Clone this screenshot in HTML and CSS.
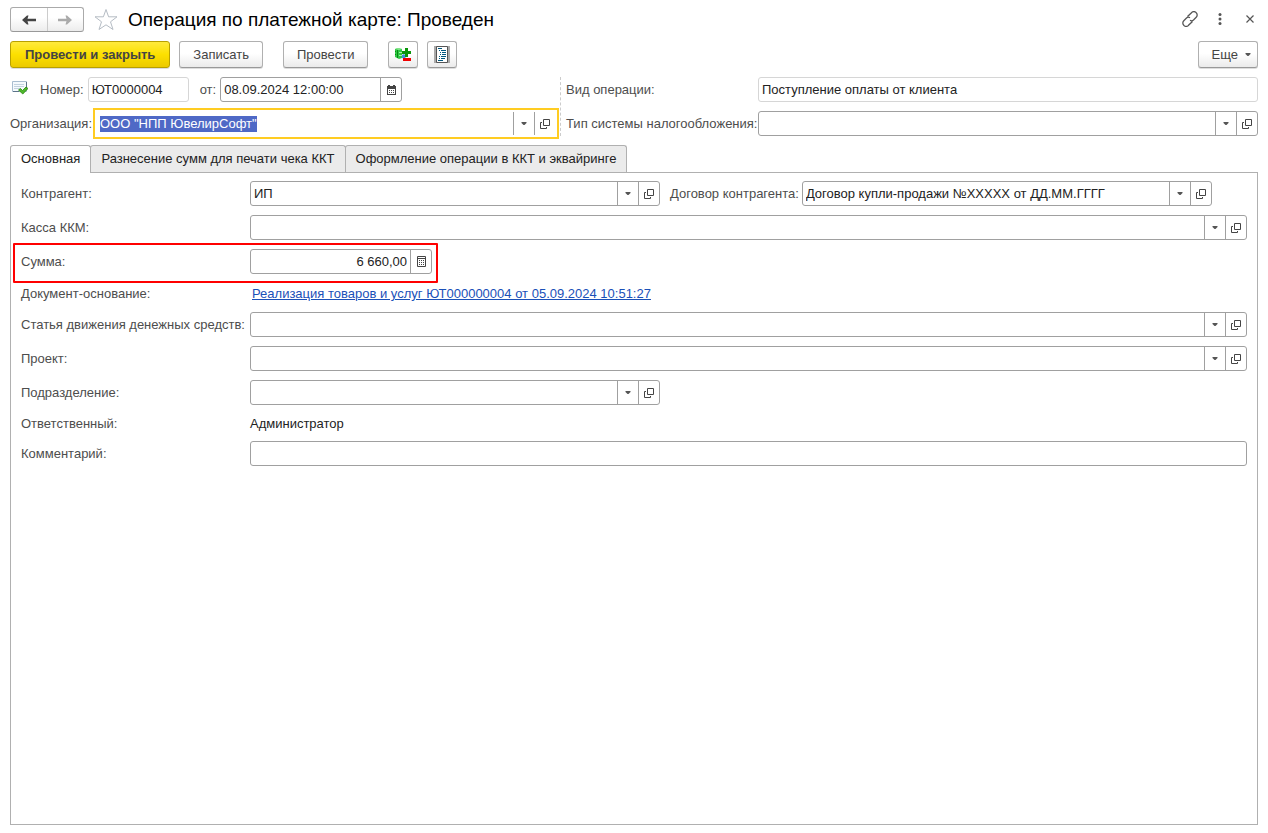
FILE: index.html
```html
<!DOCTYPE html>
<html lang="ru">
<head>
<meta charset="utf-8">
<title>Операция по платежной карте: Проведен</title>
<link rel="stylesheet" href="styles.css">
</head>
<body>
<svg class="sprite" aria-hidden="true">
  <symbol id="arrow-down" viewBox="0 0 6 4"><path d="M.5 0h5v1L3.500 3h-1L.5 1z" fill="#555"/></symbol>
  <symbol id="open" viewBox="0 0 10 10" fill="none" stroke="#444" stroke-width="1"><path d="M3.500.5h6v6h-6zM2 3.500H.5v6h6V8"/></symbol>
  <symbol id="calendar" viewBox="0 0 9 10"><path d="M1 0h2v1h3V0h2v1h1v9H0V1h1zM1 4v5h7V4z" fill="#444" fill-rule="evenodd"/><path d="M2 5h1v1H2zM4 5h1v1H4zM6 5h1v1H6zM2 7h1v1H2zM4 7h1v1H4zM6 7h1v1H6z" fill="#444"/></symbol>
  <symbol id="calc" viewBox="0 0 9 11"><path d="M.5.5h8v10h-8zM0 2.500h9" fill="none" stroke="#444"/><path d="M2 4h1v1H2zM4 4h1v1H4zM6 4h1v1H6zM2 6h1v1H2zM4 6h1v1H4zM6 6h1v1H6zM2 8h1v1H2zM4 8h1v1H4zM6 8h1v1H6z" fill="#444"/></symbol>
</svg>

<header class="titlebar">
  <div class="nav">
    <button type="button" aria-label="Назад"><svg width="14" height="10" viewBox="0 0 14 10"><path d="M0 5 5 .5h1.500L5.500 3.700H14v2.600H5.500l1 3.200H5z" fill="#444"/></svg></button>
    <button type="button" aria-label="Вперед"><svg width="14" height="10" viewBox="0 0 14 10"><path d="M14 5 9 .5H7.500l1 3.200H0v2.600h8.500l-1 3.200H9z" fill="#aaa"/></svg></button>
  </div>
  <button class="plain star" type="button" aria-label="Избранное"><svg width="24" height="23" viewBox="0 0 24 23"><path d="M12 1.500l2.600 7.300h8.400l-6.500 5 2.500 7.700-7-4.700-7 4.700 2.500-7.700-6.500-5h8.400z" fill="#fff" stroke="#b5bcc4"/></svg></button>
  <h1>Операция по платежной карте: Проведен</h1>
  <div class="window-tools">
    <button class="plain" type="button" aria-label="Получить ссылку"><svg width="16" height="16" viewBox="0 0 16 16" fill="none" stroke="#555" stroke-width="1.300"><path d="M5.500 5.500 9.500 1.700a3 3 0 0 1 4.700 0 3.200 3.200 0 0 1 0 4.600L11.500 9a3 3 0 0 1-3.500.3M10.500 10.500l-4 3.800a3 3 0 0 1-4.700 0 3.200 3.200 0 0 1 0-4.600L4.500 7A3 3 0 0 1 8 6.700"/></svg></button>
    <button class="plain" type="button" aria-label="Меню"><svg width="4" height="12" viewBox="0 0 4 12" fill="#555"><circle cx="2" cy="1.500" r="1.500"/><circle cx="2" cy="6" r="1.500"/><circle cx="2" cy="10.500" r="1.500"/></svg></button>
    <button class="plain" type="button" aria-label="Закрыть"><svg width="8" height="8" viewBox="0 0 8 8"><path d="M.5.5l7 7M7.500.5l-7 7" stroke="#555" stroke-width="1.200"/></svg></button>
  </div>
</header>

<div class="toolbar">
  <button class="btn primary" type="button">Провести и закрыть</button>
  <button class="btn" type="button">Записать</button>
  <button class="btn spaced" type="button">Провести</button>
  <button class="btn icon spaced" type="button" aria-label="Движения документа"><svg width="18" height="17" viewBox="0 0 18 17">
    <path d="M1 3l3-1 4 1v9l-3 1-4-2z" fill="#2fc843"/><path d="M1 3l3-1 4 1-3 1z" fill="#8be890"/><path d="M5 6h3v1H5zM5 9h3v1H5z" fill="#a5efab"/><path d="M1 5h1v1H1zM1 8h1v1H1zM3 4h1v8H3z" fill="#078a15"/>
    <path d="M8 9l2-1 2 2-1 3-3-1z" fill="#3a8fd8"/><path d="M11 2h3v3h3v3h-3v3h-3V8H8V5h3z" fill="#0a960a"/><path d="M9 12h8v3H9z" fill="#f00000"/></svg></button>
  <button class="btn icon" type="button" aria-label="Печать"><svg width="16" height="17" viewBox="0 0 16 17">
    <path d="M0 0h16v17H0z" fill="#aaa"/><path d="M2.500.5h11v16h-11z" fill="#fff" stroke="#555"/>
    <path d="M4 2h4v1H4zM7 4h5v1H7zM8 6h4v1H8zM8 8h4v1H8zM7 10h5v1H7zM7 12h4v1H7zM4 14h5v1H4zM5 4h1v1H5zM6 6h1v1H6zM6 8h1v1H6zM5 10h1v1H5zM5 12h1v1H5z" fill="#00577f"/></svg></button>
  <button class="btn more" type="button">Еще <svg width="6" height="4"><use href="#arrow-down"/></svg></button>
</div>

<div class="head">
  <div class="head-left">
    <div class="row number-row">
      <svg class="status" width="16" height="14" viewBox="0 0 16 14"><path d="M.5.500h14v10H.5z" fill="#f5f9fd" stroke="#a9bdd0"/><path d="M14.500 1v8M1 10.500h6" stroke="#5c7388"/><path d="M2 3.500h10M2 5.500h10M2 7.500h6" stroke="#c3d2df"/><path d="M6.500 9 8.500 7.500l2 2L14 6l2 1.500L10.800 13z" fill="#4fb82a" stroke="#27850f" stroke-width=".8"/></svg>
      <label for="number">Номер:</label>
      <span class="field readonly number"><input id="number" value="ЮТ0000004" readonly></span>
      <label for="date">от:</label>
      <span class="field date"><input id="date" value="08.09.2024 12:00:00"><button type="button" aria-label="Календарь"><svg width="9" height="10"><use href="#calendar"/></svg></button></span>
    </div>
    <div class="row org-row">
      <label for="org">Организация:</label>
      <span class="field active grow"><input id="org" value='ООО "НПП ЮвелирСофт"'><button type="button" aria-label="Выбрать"><svg width="6" height="4"><use href="#arrow-down"/></svg></button><button type="button" aria-label="Открыть"><svg width="10" height="10"><use href="#open"/></svg></button></span>
    </div>
  </div>
  <div class="head-right">
    <label for="kind">Вид операции:</label>
    <span class="field readonly"><input id="kind" value="Поступление оплаты от клиента" readonly></span>
    <label for="tax">Тип системы налогообложения:</label>
    <span class="field"><input id="tax"><button type="button" aria-label="Выбрать"><svg width="6" height="4"><use href="#arrow-down"/></svg></button><button type="button" aria-label="Открыть"><svg width="10" height="10"><use href="#open"/></svg></button></span>
  </div>
</div>

<div class="tabs" role="tablist">
  <button type="button" role="tab" aria-selected="true">Основная</button>
  <button type="button" role="tab" aria-selected="false">Разнесение сумм для печати чека ККТ</button>
  <button type="button" role="tab" aria-selected="false">Оформление операции в ККТ и эквайринге</button>
</div>

<main class="panel" role="tabpanel">
  <div class="line">
    <label for="partner">Контрагент:</label>
    <span class="field medium"><input id="partner" value="ИП"><button type="button" aria-label="Выбрать"><svg width="6" height="4"><use href="#arrow-down"/></svg></button><button type="button" aria-label="Открыть"><svg width="10" height="10"><use href="#open"/></svg></button></span>
    <label class="second" for="contract">Договор контрагента:</label>
    <span class="field medium"><input id="contract" value="Договор купли-продажи №XXXXX от ДД.ММ.ГГГГ"><button type="button" aria-label="Выбрать"><svg width="6" height="4"><use href="#arrow-down"/></svg></button><button type="button" aria-label="Открыть"><svg width="10" height="10"><use href="#open"/></svg></button></span>
  </div>
  <div class="line">
    <label for="cashbox">Касса ККМ:</label>
    <span class="field grow"><input id="cashbox"><button type="button" aria-label="Выбрать"><svg width="6" height="4"><use href="#arrow-down"/></svg></button><button type="button" aria-label="Открыть"><svg width="10" height="10"><use href="#open"/></svg></button></span>
  </div>
  <div class="line marked">
    <label for="sum">Сумма:</label>
    <span class="field date"><input class="num" id="sum" value="6 660,00"><button type="button" aria-label="Калькулятор"><svg width="9" height="11"><use href="#calc"/></svg></button></span>
  </div>
  <div class="line link-line">
    <span class="caption">Документ-основание:</span>
    <a href="#">Реализация товаров и услуг ЮТ000000004 от 05.09.2024 10:51:27</a>
  </div>
  <div class="line">
    <label for="flow">Статья движения денежных средств:</label>
    <span class="field grow"><input id="flow"><button type="button" aria-label="Выбрать"><svg width="6" height="4"><use href="#arrow-down"/></svg></button><button type="button" aria-label="Открыть"><svg width="10" height="10"><use href="#open"/></svg></button></span>
  </div>
  <div class="line">
    <label for="project">Проект:</label>
    <span class="field grow"><input id="project"><button type="button" aria-label="Выбрать"><svg width="6" height="4"><use href="#arrow-down"/></svg></button><button type="button" aria-label="Открыть"><svg width="10" height="10"><use href="#open"/></svg></button></span>
  </div>
  <div class="line">
    <label for="dept">Подразделение:</label>
    <span class="field medium"><input id="dept"><button type="button" aria-label="Выбрать"><svg width="6" height="4"><use href="#arrow-down"/></svg></button><button type="button" aria-label="Открыть"><svg width="10" height="10"><use href="#open"/></svg></button></span>
  </div>
  <div class="line text-line">
    <span class="caption">Ответственный:</span>
    <span>Администратор</span>
  </div>
  <div class="line">
    <label for="comment">Комментарий:</label>
    <span class="field grow"><input id="comment"></span>
  </div>
</main>
<script src="main.js"></script>
</body>
</html>
```
FILE: styles.css
```css
*, *::after { box-sizing: border-box; }

body {
  margin: 0;
  min-height: 100vh;
  padding: 7px 10px 8px;
  display: flex;
  flex-direction: column;
  background: #fff;
  color: #222;
  font: 13px/16px "Liberation Sans", Arial, sans-serif;
}

button, input { font: inherit; color: inherit; }
button { padding: 0; border: 0; background: none; }
svg { display: block; flex: none; }
.sprite { position: absolute; width: 0; height: 0; }
label, .caption { color: #4d4d4d; white-space: nowrap; }

/* Title bar */
.titlebar { display: flex; align-items: center; height: 25px; }
.nav {
  display: flex;
  width: 74px;
  height: 25px;
  border: 1px solid #aaa;
  border-bottom-color: #999;
  border-radius: 3px;
  background: linear-gradient(#fff 40%, #ececec);
}
.nav button { flex: 1; display: grid; place-items: center; }
.nav button + button { border-left: 1px solid #ccc; }
.star { margin: 0 10px; }
h1 { margin: 0; color: #000; font-size: 19px; line-height: 24px; font-weight: 400; white-space: nowrap; }
.window-tools { display: flex; align-items: center; gap: 20px; margin-left: auto; padding: 0 4px 2px 0; }
.window-tools button:last-child { margin-left: 4px; }

/* Command bar */
.toolbar { display: flex; gap: 9px; margin-top: 9px; }
.btn {
  height: 27px;
  padding: 0 13px;
  border: 1px solid #b0b0b0;
  border-bottom-color: #999;
  border-radius: 3px;
  background: linear-gradient(#fff 45%, #ebebeb);
  box-shadow: 0 1px 0 #ddd;
  color: #444;
  white-space: nowrap;
}
.primary {
  padding: 0 14px;
  border-color: #b8a000;
  background: linear-gradient(#ffea3d, #fce000 50%, #ecca00);
  font-weight: 700;
}
.spaced { margin-left: 11px; }
.btn.icon { width: 30px; padding: 0; display: grid; place-items: center; }
.more { display: flex; align-items: center; gap: 7px; margin-left: auto; padding-right: 6px; }

/* Fields */
.field {
  display: flex;
  height: 25px;
  min-width: 0;
  border: 1px solid #a0a0a0;
  border-radius: 3px;
  background: #fff;
}
.field input {
  flex: 1;
  min-width: 0;
  width: 0;
  padding: 0 3px;
  border: 0;
  outline: 0;
  background: none;
  line-height: 16px;
}
.field button {
  flex: none;
  width: 21px;
  display: grid;
  place-items: center;
  border-left: 1px solid #a0a0a0;
}
.field .num { text-align: right; }
.field input::selection { background: #4f69c6; color: #fff; }
.readonly { border-color: #d6d6d6; }
.active { border-color: #fff; outline: 2px solid #fc2; outline-offset: 1px; border-radius: 0; }
.grow { flex: 1; }
.medium { width: 410px; }
.date { width: 182px; }
.number { width: 101px; }

/* Document header */
.head { display: flex; margin-top: 9px; }
.head-left { display: grid; gap: 9px; width: 551px; border-right: 1px dashed #ccc; }
.row { display: flex; align-items: center; }
.status { margin: 0 12px 4px 2px; }
.number-row .field { margin-left: 4px; }
.number-row .field + label { margin-left: 11px; }
.org-row { padding-right: 4px; }
.org-row label { width: 86px; }
.head-right {
  flex: 1;
  display: grid;
  grid-template-columns: 187px 1fr;
  gap: 9px 5px;
  align-items: center;
  padding-left: 5px;
}

/* Tabs */
.tabs { display: flex; margin-top: 9px; }
.tabs button {
  height: 27px;
  margin-left: -1px;
  padding: 0 10px;
  border: 1px solid #b0b0b0;
  border-bottom: 0;
  border-radius: 3px 3px 0 0;
  background: #ebebeb;
  white-space: nowrap;
}
.tabs [aria-selected="true"] {
  height: 28px;
  margin: 0 0 -1px;
  padding-bottom: 1px;
  background: #fff;
  z-index: 1;
}

/* Tab page */
.panel {
  flex: 1;
  display: flex;
  flex-direction: column;
  gap: 9px;
  padding: 8px 10px;
  border: 1px solid #b0b0b0;
}
.line { display: flex; align-items: center; }
.line > :first-child { flex: none; width: 229px; }
.line .second { margin: 0 3px 0 10px; }
.link-line { height: 20px; padding-top: 2px; }
.text-line { height: 18px; padding-top: 2px; }
.line a { margin-left: 2px; color: #1a50b8; }
.marked { position: relative; }
.marked::after {
  content: "";
  position: absolute;
  top: -6px;
  bottom: -9px;
  left: -8px;
  width: 425px;
  border: 2px solid #f00;
  border-radius: 1px;
  pointer-events: none;
}
```
FILE: main.js
```js
const organization = document.getElementById("org");
organization.focus();
organization.select();
```
